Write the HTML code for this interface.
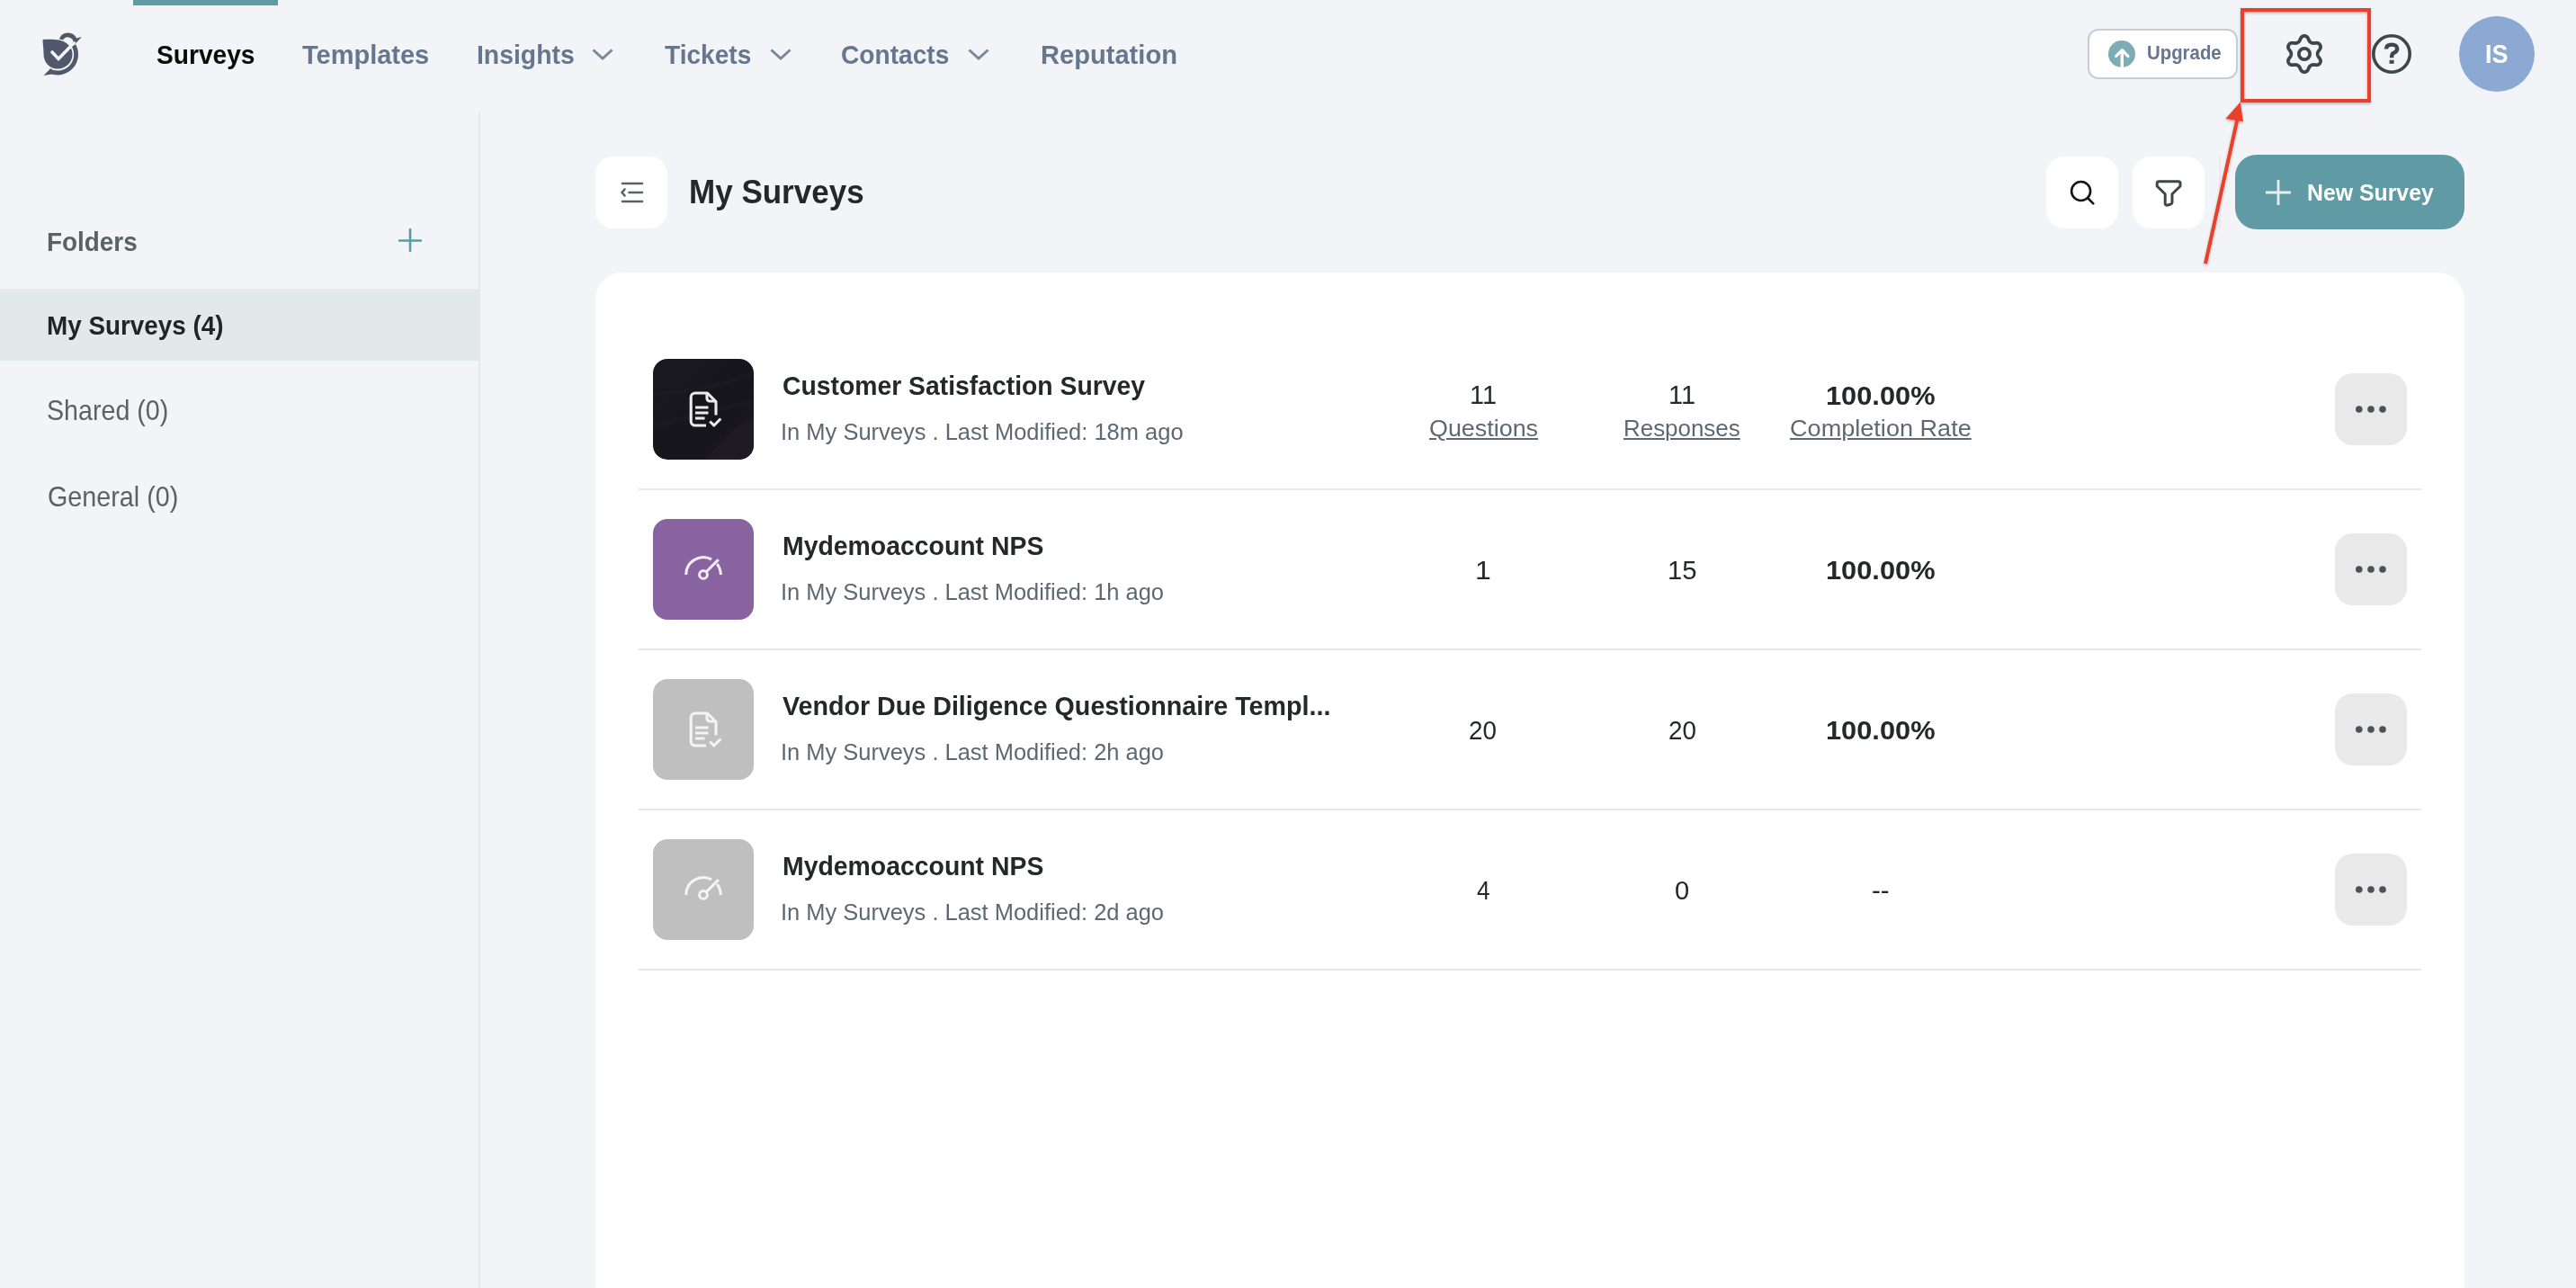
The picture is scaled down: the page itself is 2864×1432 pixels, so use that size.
<!DOCTYPE html>
<html><head><meta charset="utf-8"><title>My Surveys</title>
<style>
html,body{margin:0;padding:0;}
body{width:2864px;height:1432px;overflow:hidden;background:#f3f4f7;position:relative;font-family:"Liberation Sans",sans-serif;}
svg.bgs{position:absolute;left:0;top:0;}
.t{position:absolute;white-space:nowrap;transform-origin:0 0;}
</style></head><body>
<svg class="bgs" width="2864" height="1432" viewBox="0 0 2864 1432"><defs><linearGradient id="dk" x1="0" y1="0" x2="1" y2="1"><stop offset="0" stop-color="#1a1920"/><stop offset="0.6" stop-color="#16151c"/><stop offset="1" stop-color="#1c1a21"/></linearGradient><clipPath id="dkclip"><rect x="726" y="399" width="112" height="112" rx="16"/></clipPath><filter id="sh" x="-20%" y="-20%" width="140%" height="140%"><feDropShadow dx="0" dy="1.5" stdDeviation="1.5" flood-color="#000" flood-opacity="0.28"/></filter></defs>
<rect x="0" y="321" width="532" height="80" fill="#e2e9eb"/>
<rect x="532" y="124" width="2" height="1308" fill="#e6e7e9"/>
<rect x="148" y="0" width="161" height="6" fill="#5f9aa5"/>
<g fill="#4f596b"><path d="M47.5,44 C53,43.6 60,43.4 66,44.6 C74,46.5 80.5,52 80.5,60.5 C80.5,69.5 73,76.5 64,76.5 C55,76.5 48.5,69.5 48.5,60 C48.5,54 47.6,48.5 47.5,44 Z"/></g>
<path d="M58,58 L65,65.4 L80.5,49.5" fill="none" stroke="#f3f4f7" stroke-width="3.6" stroke-linecap="round" stroke-linejoin="miter"/>
<path d="M82,50.5 A20.5,20.5 0 0 1 56.5,79.5" fill="none" stroke="#4f596b" stroke-width="4.8"/>
<path d="M56.5,75.8 L48.5,84 L60,82 Z" fill="#4f596b"/>
<path d="M65.8,43.2 A10.6,10.6 0 0 1 85.2,42.6 L90.8,41 L83.4,49 L81.6,48.2 A6.1,6.1 0 0 0 70.2,44.6 Z" fill="#4f596b"/>
<path d="M65,65.4 L83.6,46.6" fill="none" stroke="#f3f4f7" stroke-width="2.3"/>
<path d="M659.5,55.5 L670,65 L680.5,55.5" fill="none" stroke="#7b8798" stroke-width="3"/>
<path d="M857.5,55.5 L868,65 L878.5,55.5" fill="none" stroke="#7b8798" stroke-width="3"/>
<path d="M1077.5,55.5 L1088,65 L1098.5,55.5" fill="none" stroke="#7b8798" stroke-width="3"/>
<rect x="2322" y="33" width="165" height="54" rx="11" fill="#ffffff" stroke="#c7ccd4" stroke-width="2"/>
<circle cx="2359" cy="60" r="15" fill="#7cadb4"/>
<path d="M2359.3,75.2 V57" fill="none" stroke="#fff" stroke-width="3.4"/>
<path d="M2352.7,62.4 L2359.5,55.6 L2366,62.6" fill="none" stroke="#fff" stroke-width="3.2" stroke-linecap="round" stroke-linejoin="round"/>
<path d="M2576.70,60.00 L2576.70,60.26 L2576.72,60.51 L2576.74,60.77 L2576.78,61.03 L2576.83,61.30 L2576.90,61.57 L2576.99,61.84 L2577.10,62.12 L2577.24,62.41 L2577.40,62.72 L2577.59,63.03 L2577.82,63.36 L2578.06,63.71 L2578.33,64.07 L2578.61,64.45 L2578.89,64.84 L2579.15,65.24 L2579.39,65.65 L2579.60,66.06 L2579.76,66.47 L2579.89,66.87 L2579.97,67.26 L2580.01,67.65 L2580.02,68.02 L2579.99,68.39 L2579.92,68.74 L2579.83,69.09 L2579.71,69.42 L2579.57,69.74 L2579.41,70.05 L2579.22,70.35 L2579.01,70.63 L2578.78,70.90 L2578.53,71.15 L2578.26,71.38 L2577.96,71.59 L2577.63,71.78 L2577.27,71.93 L2576.89,72.06 L2576.48,72.15 L2576.04,72.21 L2575.59,72.23 L2575.12,72.23 L2574.64,72.20 L2574.16,72.16 L2573.69,72.11 L2573.24,72.06 L2572.82,72.02 L2572.42,71.99 L2572.05,71.98 L2571.71,71.99 L2571.39,72.02 L2571.09,72.06 L2570.81,72.12 L2570.54,72.20 L2570.29,72.29 L2570.04,72.38 L2569.80,72.49 L2569.57,72.61 L2569.35,72.73 L2569.13,72.86 L2568.91,73.00 L2568.70,73.16 L2568.50,73.32 L2568.29,73.50 L2568.09,73.69 L2567.90,73.90 L2567.71,74.14 L2567.53,74.40 L2567.35,74.69 L2567.17,75.02 L2567.00,75.38 L2566.82,75.77 L2566.64,76.18 L2566.45,76.61 L2566.25,77.04 L2566.03,77.47 L2565.80,77.88 L2565.55,78.27 L2565.28,78.62 L2565.00,78.92 L2564.70,79.19 L2564.38,79.42 L2564.06,79.61 L2563.73,79.77 L2563.39,79.89 L2563.05,79.98 L2562.70,80.05 L2562.35,80.09 L2562.00,80.10 L2561.65,80.09 L2561.30,80.05 L2560.95,79.98 L2560.61,79.89 L2560.27,79.77 L2559.94,79.61 L2559.62,79.42 L2559.30,79.19 L2559.00,78.92 L2558.72,78.62 L2558.45,78.27 L2558.20,77.88 L2557.97,77.47 L2557.75,77.04 L2557.55,76.61 L2557.36,76.18 L2557.18,75.77 L2557.00,75.38 L2556.83,75.02 L2556.65,74.69 L2556.47,74.40 L2556.29,74.14 L2556.10,73.90 L2555.91,73.69 L2555.71,73.50 L2555.50,73.32 L2555.30,73.16 L2555.09,73.00 L2554.87,72.86 L2554.65,72.73 L2554.43,72.61 L2554.20,72.49 L2553.96,72.38 L2553.71,72.29 L2553.46,72.20 L2553.19,72.12 L2552.91,72.06 L2552.61,72.02 L2552.29,71.99 L2551.95,71.98 L2551.58,71.99 L2551.18,72.02 L2550.76,72.06 L2550.31,72.11 L2549.84,72.16 L2549.36,72.20 L2548.88,72.23 L2548.41,72.23 L2547.96,72.21 L2547.52,72.15 L2547.11,72.06 L2546.73,71.93 L2546.37,71.78 L2546.04,71.59 L2545.74,71.38 L2545.47,71.15 L2545.22,70.90 L2544.99,70.63 L2544.78,70.35 L2544.59,70.05 L2544.43,69.74 L2544.29,69.42 L2544.17,69.09 L2544.08,68.74 L2544.01,68.39 L2543.98,68.02 L2543.99,67.65 L2544.03,67.26 L2544.11,66.87 L2544.24,66.47 L2544.40,66.06 L2544.61,65.65 L2544.85,65.24 L2545.11,64.84 L2545.39,64.45 L2545.67,64.07 L2545.94,63.71 L2546.18,63.36 L2546.41,63.03 L2546.60,62.72 L2546.76,62.41 L2546.90,62.12 L2547.01,61.84 L2547.10,61.57 L2547.17,61.30 L2547.22,61.03 L2547.26,60.77 L2547.28,60.51 L2547.30,60.26 L2547.30,60.00 L2547.30,59.74 L2547.28,59.49 L2547.26,59.23 L2547.22,58.97 L2547.17,58.70 L2547.10,58.43 L2547.01,58.16 L2546.90,57.88 L2546.76,57.59 L2546.60,57.28 L2546.41,56.97 L2546.18,56.64 L2545.94,56.29 L2545.67,55.93 L2545.39,55.55 L2545.11,55.16 L2544.85,54.76 L2544.61,54.35 L2544.40,53.94 L2544.24,53.53 L2544.11,53.13 L2544.03,52.74 L2543.99,52.35 L2543.98,51.98 L2544.01,51.61 L2544.08,51.26 L2544.17,50.91 L2544.29,50.58 L2544.43,50.26 L2544.59,49.95 L2544.78,49.65 L2544.99,49.37 L2545.22,49.10 L2545.47,48.85 L2545.74,48.62 L2546.04,48.41 L2546.37,48.22 L2546.73,48.07 L2547.11,47.94 L2547.52,47.85 L2547.96,47.79 L2548.41,47.77 L2548.88,47.77 L2549.36,47.80 L2549.84,47.84 L2550.31,47.89 L2550.76,47.94 L2551.18,47.98 L2551.58,48.01 L2551.95,48.02 L2552.29,48.01 L2552.61,47.98 L2552.91,47.94 L2553.19,47.88 L2553.46,47.80 L2553.71,47.71 L2553.96,47.62 L2554.20,47.51 L2554.43,47.39 L2554.65,47.27 L2554.87,47.14 L2555.09,47.00 L2555.30,46.84 L2555.50,46.68 L2555.71,46.50 L2555.91,46.31 L2556.10,46.10 L2556.29,45.86 L2556.47,45.60 L2556.65,45.31 L2556.83,44.98 L2557.00,44.62 L2557.18,44.23 L2557.36,43.82 L2557.55,43.39 L2557.75,42.96 L2557.97,42.53 L2558.20,42.12 L2558.45,41.73 L2558.72,41.38 L2559.00,41.08 L2559.30,40.81 L2559.62,40.58 L2559.94,40.39 L2560.27,40.23 L2560.61,40.11 L2560.95,40.02 L2561.30,39.95 L2561.65,39.91 L2562.00,39.90 L2562.35,39.91 L2562.70,39.95 L2563.05,40.02 L2563.39,40.11 L2563.73,40.23 L2564.06,40.39 L2564.38,40.58 L2564.70,40.81 L2565.00,41.08 L2565.28,41.38 L2565.55,41.73 L2565.80,42.12 L2566.03,42.53 L2566.25,42.96 L2566.45,43.39 L2566.64,43.82 L2566.82,44.23 L2567.00,44.62 L2567.17,44.98 L2567.35,45.31 L2567.53,45.60 L2567.71,45.86 L2567.90,46.10 L2568.09,46.31 L2568.29,46.50 L2568.50,46.68 L2568.70,46.84 L2568.91,47.00 L2569.13,47.14 L2569.35,47.27 L2569.57,47.39 L2569.80,47.51 L2570.04,47.62 L2570.29,47.71 L2570.54,47.80 L2570.81,47.88 L2571.09,47.94 L2571.39,47.98 L2571.71,48.01 L2572.05,48.02 L2572.42,48.01 L2572.82,47.98 L2573.24,47.94 L2573.69,47.89 L2574.16,47.84 L2574.64,47.80 L2575.12,47.77 L2575.59,47.77 L2576.04,47.79 L2576.48,47.85 L2576.89,47.94 L2577.27,48.07 L2577.63,48.22 L2577.96,48.41 L2578.26,48.62 L2578.53,48.85 L2578.78,49.10 L2579.01,49.37 L2579.22,49.65 L2579.41,49.95 L2579.57,50.26 L2579.71,50.58 L2579.83,50.91 L2579.92,51.26 L2579.99,51.61 L2580.02,51.98 L2580.01,52.35 L2579.97,52.74 L2579.89,53.13 L2579.76,53.53 L2579.60,53.94 L2579.39,54.35 L2579.15,54.76 L2578.89,55.16 L2578.61,55.55 L2578.33,55.93 L2578.06,56.29 L2577.82,56.64 L2577.59,56.97 L2577.40,57.28 L2577.24,57.59 L2577.10,57.88 L2576.99,58.16 L2576.90,58.43 L2576.83,58.70 L2576.78,58.97 L2576.74,59.23 L2576.72,59.49 L2576.70,59.74 L2576.70,60.00 Z" fill="none" stroke="#3c474b" stroke-width="3.8" stroke-linejoin="round"/>
<circle cx="2562" cy="60" r="6.1" fill="none" stroke="#3c474b" stroke-width="3.8"/>
<circle cx="2659" cy="60" r="20.2" fill="none" stroke="#3c474b" stroke-width="3.6"/>
<path d="M2653,54.5 C2653,51 2655.5,49.6 2659.2,49.6 C2663,49.6 2665.2,51.6 2665.2,54.2 C2665.2,57.2 2662.6,58 2660.8,59.2 C2659.4,60.1 2659.1,61 2659.1,64.3" fill="none" stroke="#3c474b" stroke-width="4.4"/>
<rect x="2656.6" y="66.8" width="5" height="4" fill="#3c474b"/>
<circle cx="2776" cy="60" r="42" fill="#8ca9d3"/>
<path d="M444,267.5 H468 M456,255 V279" fill="none" stroke="#5b9aa3" stroke-width="2.6" stroke-linecap="round"/>
<rect x="662" y="303" width="2078" height="1200" rx="30" fill="#ffffff"/>
<rect x="662" y="174" width="80" height="80" rx="20" fill="#ffffff"/>
<path d="M692,204 H714 M699.5,214 H714 M692,224 H714 M694.5,210.5 L691.5,214 L694.5,217.5" fill="none" stroke="#5b6366" stroke-width="2.6" stroke-linecap="round" stroke-linejoin="round"/>
<rect x="2275" y="174" width="80" height="80" rx="20" fill="#ffffff"/>
<rect x="2371" y="174" width="80" height="80" rx="20" fill="#ffffff"/>
<circle cx="2313.6" cy="212.5" r="10.5" fill="none" stroke="#0f1717" stroke-width="2.6"/>
<path d="M2321.5,220.5 L2327.3,226.3" fill="none" stroke="#0f1717" stroke-width="2.6" stroke-linecap="round"/>
<path d="M2400.2,201.8 H2422 A2,2 0 0 1 2424,203.8 V207 L2415,215.8 V225 A2.4,2.4 0 0 1 2413.6,227 L2409.4,228.2 A1.8,1.8 0 0 1 2407.2,226.6 V215.8 L2398.2,207 V203.8 A2,2 0 0 1 2400.2,201.8 Z" fill="none" stroke="#3d4649" stroke-width="3" stroke-linejoin="round"/>
<rect x="2467.5" y="172" width="1.2" height="83" fill="#e3e5e8"/>
<rect x="2485" y="172" width="255" height="83" rx="24" fill="#5f9aa5"/>
<path d="M2519,214 H2547 M2533,200 V228" fill="none" stroke="#e3eeef" stroke-width="2.8"/>
<rect x="726" y="399" width="112" height="112" rx="16" fill="url(#dk)"/>
<g clip-path="url(#dkclip)"><path d="M726,437 C760,432 800,430 838,412 L838,416 C800,434 760,437 726,442 Z" fill="#1e1d25" opacity="0.5"/><path d="M726,470 C770,462 805,448 838,445 L838,450 C805,453 770,468 726,476 Z" fill="#1c1b22" opacity="0.5"/><path d="M786,511 C800,492 815,473 838,466 L838,511 Z" fill="#201c24" opacity="0.8"/></g>
<g transform="translate(0,0)" fill="none" stroke="#ececec" stroke-width="3.1" stroke-linecap="butt" stroke-linejoin="round"><path d="M785,473 H773 A4.8,4.8 0 0 1 768.2,468.2 V441.8 A4.8,4.8 0 0 1 773,437 H786.5 L796,446.5 V461.5"/><path d="M786,437.5 V443 A3,3 0 0 0 789,446 H795.5"/><path d="M773,453 H787.5 M773,459 H787.5 M773,465 H783.5"/><path d="M789.3,468.5 L793.8,473 L801.3,465.5"/></g>
<rect x="2596" y="415" width="80" height="80" rx="20" fill="#e9e9e9"/>
<circle cx="2622.8" cy="455" r="3.8" fill="#4a5357"/>
<circle cx="2636" cy="455" r="3.8" fill="#4a5357"/>
<circle cx="2649" cy="455" r="3.8" fill="#4a5357"/>
<rect x="710" y="543" width="1982" height="2" fill="#e8e8e8"/>
<rect x="726" y="577" width="112" height="112" rx="16" fill="#8963a0"/>
<g fill="none" stroke="#f3eef6" stroke-width="3"><path d="M762.70,638.90 A19.3,19.3 0 0 1 791.06,621.86"/><path d="M797.21,627.02 A19.3,19.3 0 0 1 801.30,638.90"/><circle cx="782" cy="638.90" r="4.4"/><path d="M785.20,635.70 L798.80,622.10" stroke-linecap="butt"/></g>
<rect x="2596" y="593" width="80" height="80" rx="20" fill="#e9e9e9"/>
<circle cx="2622.8" cy="633" r="3.8" fill="#4a5357"/>
<circle cx="2636" cy="633" r="3.8" fill="#4a5357"/>
<circle cx="2649" cy="633" r="3.8" fill="#4a5357"/>
<rect x="710" y="721" width="1982" height="2" fill="#e8e8e8"/>
<rect x="726" y="755" width="112" height="112" rx="16" fill="#bfbfbf"/>
<g transform="translate(0,356)" fill="none" stroke="#f4f4f4" stroke-width="3.1" stroke-linecap="butt" stroke-linejoin="round"><path d="M785,473 H773 A4.8,4.8 0 0 1 768.2,468.2 V441.8 A4.8,4.8 0 0 1 773,437 H786.5 L796,446.5 V461.5"/><path d="M786,437.5 V443 A3,3 0 0 0 789,446 H795.5"/><path d="M773,453 H787.5 M773,459 H787.5 M773,465 H783.5"/><path d="M789.3,468.5 L793.8,473 L801.3,465.5"/></g>
<rect x="2596" y="771" width="80" height="80" rx="20" fill="#e9e9e9"/>
<circle cx="2622.8" cy="811" r="3.8" fill="#4a5357"/>
<circle cx="2636" cy="811" r="3.8" fill="#4a5357"/>
<circle cx="2649" cy="811" r="3.8" fill="#4a5357"/>
<rect x="710" y="899" width="1982" height="2" fill="#e8e8e8"/>
<rect x="726" y="933" width="112" height="112" rx="16" fill="#bfbfbf"/>
<g fill="none" stroke="#f4f4f4" stroke-width="3"><path d="M762.70,994.90 A19.3,19.3 0 0 1 791.06,977.86"/><path d="M797.21,983.02 A19.3,19.3 0 0 1 801.30,994.90"/><circle cx="782" cy="994.90" r="4.4"/><path d="M785.20,991.70 L798.80,978.10" stroke-linecap="butt"/></g>
<rect x="2596" y="949" width="80" height="80" rx="20" fill="#e9e9e9"/>
<circle cx="2622.8" cy="989" r="3.8" fill="#4a5357"/>
<circle cx="2636" cy="989" r="3.8" fill="#4a5357"/>
<circle cx="2649" cy="989" r="3.8" fill="#4a5357"/>
<rect x="710" y="1077" width="1982" height="2" fill="#e8e8e8"/>
<g filter="url(#sh)"><rect x="2493" y="11" width="141" height="101" fill="none" stroke="#e8402a" stroke-width="4"/><path d="M2452,293 L2488,130" fill="none" stroke="#e8402a" stroke-width="4" stroke-linecap="butt"/><path d="M2490.8,113.5 L2474.4,132 L2494,135.2 Z" fill="#e8402a"/></g>
</svg>
<div class="t" style="left:174.20px;top:45.68px;font-size:30.29px;line-height:30.29px;color:#0b0b0b;font-weight:700;transform:scaleX(0.9289);">Surveys</div>
<div class="t" style="left:336.00px;top:45.68px;font-size:30.29px;line-height:30.29px;color:#65768f;font-weight:700;transform:scaleX(0.9571);">Templates</div>
<div class="t" style="left:529.96px;top:45.68px;font-size:30.29px;line-height:30.29px;color:#65768f;font-weight:700;transform:scaleX(0.9360);">Insights</div>
<div class="t" style="left:739.00px;top:45.68px;font-size:30.29px;line-height:30.29px;color:#65768f;font-weight:700;transform:scaleX(0.9271);">Tickets</div>
<div class="t" style="left:935.30px;top:45.68px;font-size:30.29px;line-height:30.29px;color:#65768f;font-weight:700;transform:scaleX(0.9283);">Contacts</div>
<div class="t" style="left:1156.50px;top:45.68px;font-size:30.29px;line-height:30.29px;color:#65768f;font-weight:700;transform:scaleX(0.9609);">Reputation</div>
<div class="t" style="left:2387.30px;top:48.19px;font-size:22.50px;line-height:22.50px;color:#65768f;font-weight:700;transform:scaleX(0.9059);">Upgrade</div>
<div class="t" style="left:2763.30px;top:44.92px;font-size:30.00px;line-height:30.00px;color:#ffffff;font-weight:700;transform:scaleX(0.8995);">IS</div>
<div class="t" style="left:52.35px;top:253.62px;font-size:30.36px;line-height:30.36px;color:#5c6166;font-weight:700;transform:scaleX(0.9178);">Folders</div>
<div class="t" style="left:52.35px;top:346.87px;font-size:30.36px;line-height:30.36px;color:#212529;font-weight:700;transform:scaleX(0.9173);">My Surveys (4)</div>
<div class="t" style="left:52.30px;top:442.32px;font-size:30.71px;line-height:30.71px;color:#5c6166;transform:scaleX(0.9330);">Shared (0)</div>
<div class="t" style="left:52.54px;top:538.32px;font-size:30.71px;line-height:30.71px;color:#5c6166;transform:scaleX(0.9354);">General (0)</div>
<div class="t" style="left:766.40px;top:195.47px;font-size:37.71px;line-height:37.71px;color:#25282b;font-weight:700;transform:scaleX(0.9288);">My Surveys</div>
<div class="t" style="left:2564.64px;top:201.03px;font-size:26.29px;line-height:26.29px;color:#ffffff;font-weight:700;transform:scaleX(0.9447);">New Survey</div>
<div class="t" style="left:870.25px;top:414.82px;font-size:28.93px;line-height:28.93px;color:#25282b;font-weight:700;transform:scaleX(0.9794);">Customer Satisfaction Survey</div>
<div class="t" style="left:868.16px;top:467.03px;font-size:26.29px;line-height:26.29px;color:#5f6870;transform:scaleX(0.9696);">In My Surveys . Last Modified: 18m ago</div>
<div class="t" style="left:1633.84px;top:423.52px;font-size:29.29px;line-height:29.29px;color:#25282b;transform:scaleX(0.9860);">11</div>
<div class="t" style="left:1855.18px;top:423.52px;font-size:29.29px;line-height:29.29px;color:#25282b;transform:scaleX(0.9860);">11</div>
<div class="t" style="left:2030.18px;top:424.52px;font-size:29.29px;line-height:29.29px;color:#25282b;font-weight:700;transform:scaleX(1.0510);">100.00%</div>
<div class="t" style="left:870.25px;top:592.82px;font-size:28.93px;line-height:28.93px;color:#25282b;font-weight:700;transform:scaleX(0.9819);">Mydemoaccount NPS</div>
<div class="t" style="left:868.16px;top:645.03px;font-size:26.29px;line-height:26.29px;color:#5f6870;transform:scaleX(0.9689);">In My Surveys . Last Modified: 1h ago</div>
<div class="t" style="left:1640.01px;top:619.37px;font-size:29.29px;line-height:29.29px;color:#25282b;transform:scaleX(1.0912);">1</div>
<div class="t" style="left:1853.97px;top:619.37px;font-size:29.29px;line-height:29.29px;color:#25282b;transform:scaleX(0.9974);">15</div>
<div class="t" style="left:2030.18px;top:619.37px;font-size:29.29px;line-height:29.29px;color:#25282b;font-weight:700;transform:scaleX(1.0510);">100.00%</div>
<div class="t" style="left:870.04px;top:770.82px;font-size:28.93px;line-height:28.93px;color:#25282b;font-weight:700;transform:scaleX(0.9909);">Vendor Due Diligence Questionnaire Templ...</div>
<div class="t" style="left:868.16px;top:823.03px;font-size:26.29px;line-height:26.29px;color:#5f6870;transform:scaleX(0.9689);">In My Surveys . Last Modified: 2h ago</div>
<div class="t" style="left:1633.43px;top:797.37px;font-size:29.29px;line-height:29.29px;color:#25282b;transform:scaleX(0.9483);">20</div>
<div class="t" style="left:1854.77px;top:797.37px;font-size:29.29px;line-height:29.29px;color:#25282b;transform:scaleX(0.9483);">20</div>
<div class="t" style="left:2030.18px;top:797.37px;font-size:29.29px;line-height:29.29px;color:#25282b;font-weight:700;transform:scaleX(1.0510);">100.00%</div>
<div class="t" style="left:870.25px;top:948.82px;font-size:28.93px;line-height:28.93px;color:#25282b;font-weight:700;transform:scaleX(0.9819);">Mydemoaccount NPS</div>
<div class="t" style="left:868.16px;top:1001.03px;font-size:26.29px;line-height:26.29px;color:#5f6870;transform:scaleX(0.9689);">In My Surveys . Last Modified: 2d ago</div>
<div class="t" style="left:1641.61px;top:975.37px;font-size:29.29px;line-height:29.29px;color:#25282b;transform:scaleX(0.8943);">4</div>
<div class="t" style="left:1862.15px;top:975.37px;font-size:29.29px;line-height:29.29px;color:#25282b;transform:scaleX(0.9928);">0</div>
<div class="t" style="left:2081.20px;top:975.37px;font-size:29.29px;line-height:29.29px;color:#25282b;transform:scaleX(1.0064);">--</div>
<div class="t" style="left:1588.64px;top:463.50px;font-size:25.71px;line-height:25.71px;color:#5f6870;text-decoration:underline;text-decoration-thickness:2px;text-underline-offset:2px;transform:scaleX(1.0460);">Questions</div>
<div class="t" style="left:1804.72px;top:463.50px;font-size:25.71px;line-height:25.71px;color:#5f6870;text-decoration:underline;text-decoration-thickness:2px;text-underline-offset:2px;transform:scaleX(1.0086);">Responses</div>
<div class="t" style="left:1990.42px;top:463.50px;font-size:25.71px;line-height:25.71px;color:#5f6870;text-decoration:underline;text-decoration-thickness:2px;text-underline-offset:2px;transform:scaleX(1.0539);">Completion Rate</div>
</body></html>
